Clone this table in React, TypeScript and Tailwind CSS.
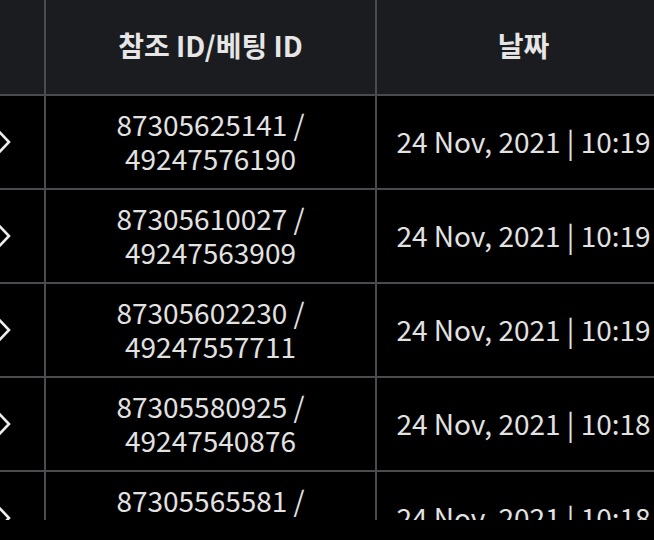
const rows = [
  { ref: "87305625141", bet: "49247576190", date: "24 Nov, 2021 | 10:19" },
  { ref: "87305610027", bet: "49247563909", date: "24 Nov, 2021 | 10:19" },
  { ref: "87305602230", bet: "49247557711", date: "24 Nov, 2021 | 10:19" },
  { ref: "87305580925", bet: "49247540876", date: "24 Nov, 2021 | 10:18" },
  { ref: "87305565581", bet: "49247529064", date: "24 Nov, 2021 | 10:18" },
];

function Chevron() {
  return (
    <svg width="14" height="26" viewBox="0 0 14 26" fill="none" className="ml-[-3px]">
      <path d="M1 1.5 L12 13 L1 24.5" stroke="#ececec" strokeWidth="2.6" strokeLinecap="square" />
    </svg>
  );
}

export default function App() {
  return (
    <div className="h-[540px] w-[654px] bg-black font-['Noto_Sans_CJK_KR','Noto_Sans',sans-serif]">
      <div className="h-[520px] overflow-hidden">
        <div className="grid w-[674px] grid-cols-[46px_331px_293px]">
          {/* header */}
          <div className="h-[96px] border-r-2 border-b-2 border-[#4a4a4f] bg-[#1b1c20]" />
          <div className="flex h-[96px] items-center justify-center border-r-2 border-b-2 border-[#4a4a4f] bg-[#1b1c20] pb-[4px] text-[28px] font-bold text-[#e6e6e6]">
            참조 ID/베팅 ID
          </div>
          <div className="flex h-[96px] items-center justify-center border-b-2 border-[#4a4a4f] bg-[#1b1c20] pb-[4px] text-[28px] font-bold text-[#e6e6e6]">
            날짜
          </div>

          {rows.map((r) => (
            <div key={r.ref} className="contents">
              <div className="flex h-[94px] items-center border-r-2 border-b-2 border-[#4a4a4f]">
                <Chevron />
              </div>
              <div className="flex h-[94px] items-center justify-center border-r-2 border-b-2 border-[#4a4a4f] pb-[2px] text-center text-[28px] leading-[34px] text-[#e2e2e2]">
                <p>
                  {r.ref} /<br />
                  {r.bet}
                </p>
              </div>
              <div className="flex h-[94px] items-center justify-center border-b-2 border-[#4a4a4f] pb-[2px] text-[28px] text-[#e2e2e2]">
                {r.date}
              </div>
            </div>
          ))}
        </div>
      </div>
    </div>
  );
}
